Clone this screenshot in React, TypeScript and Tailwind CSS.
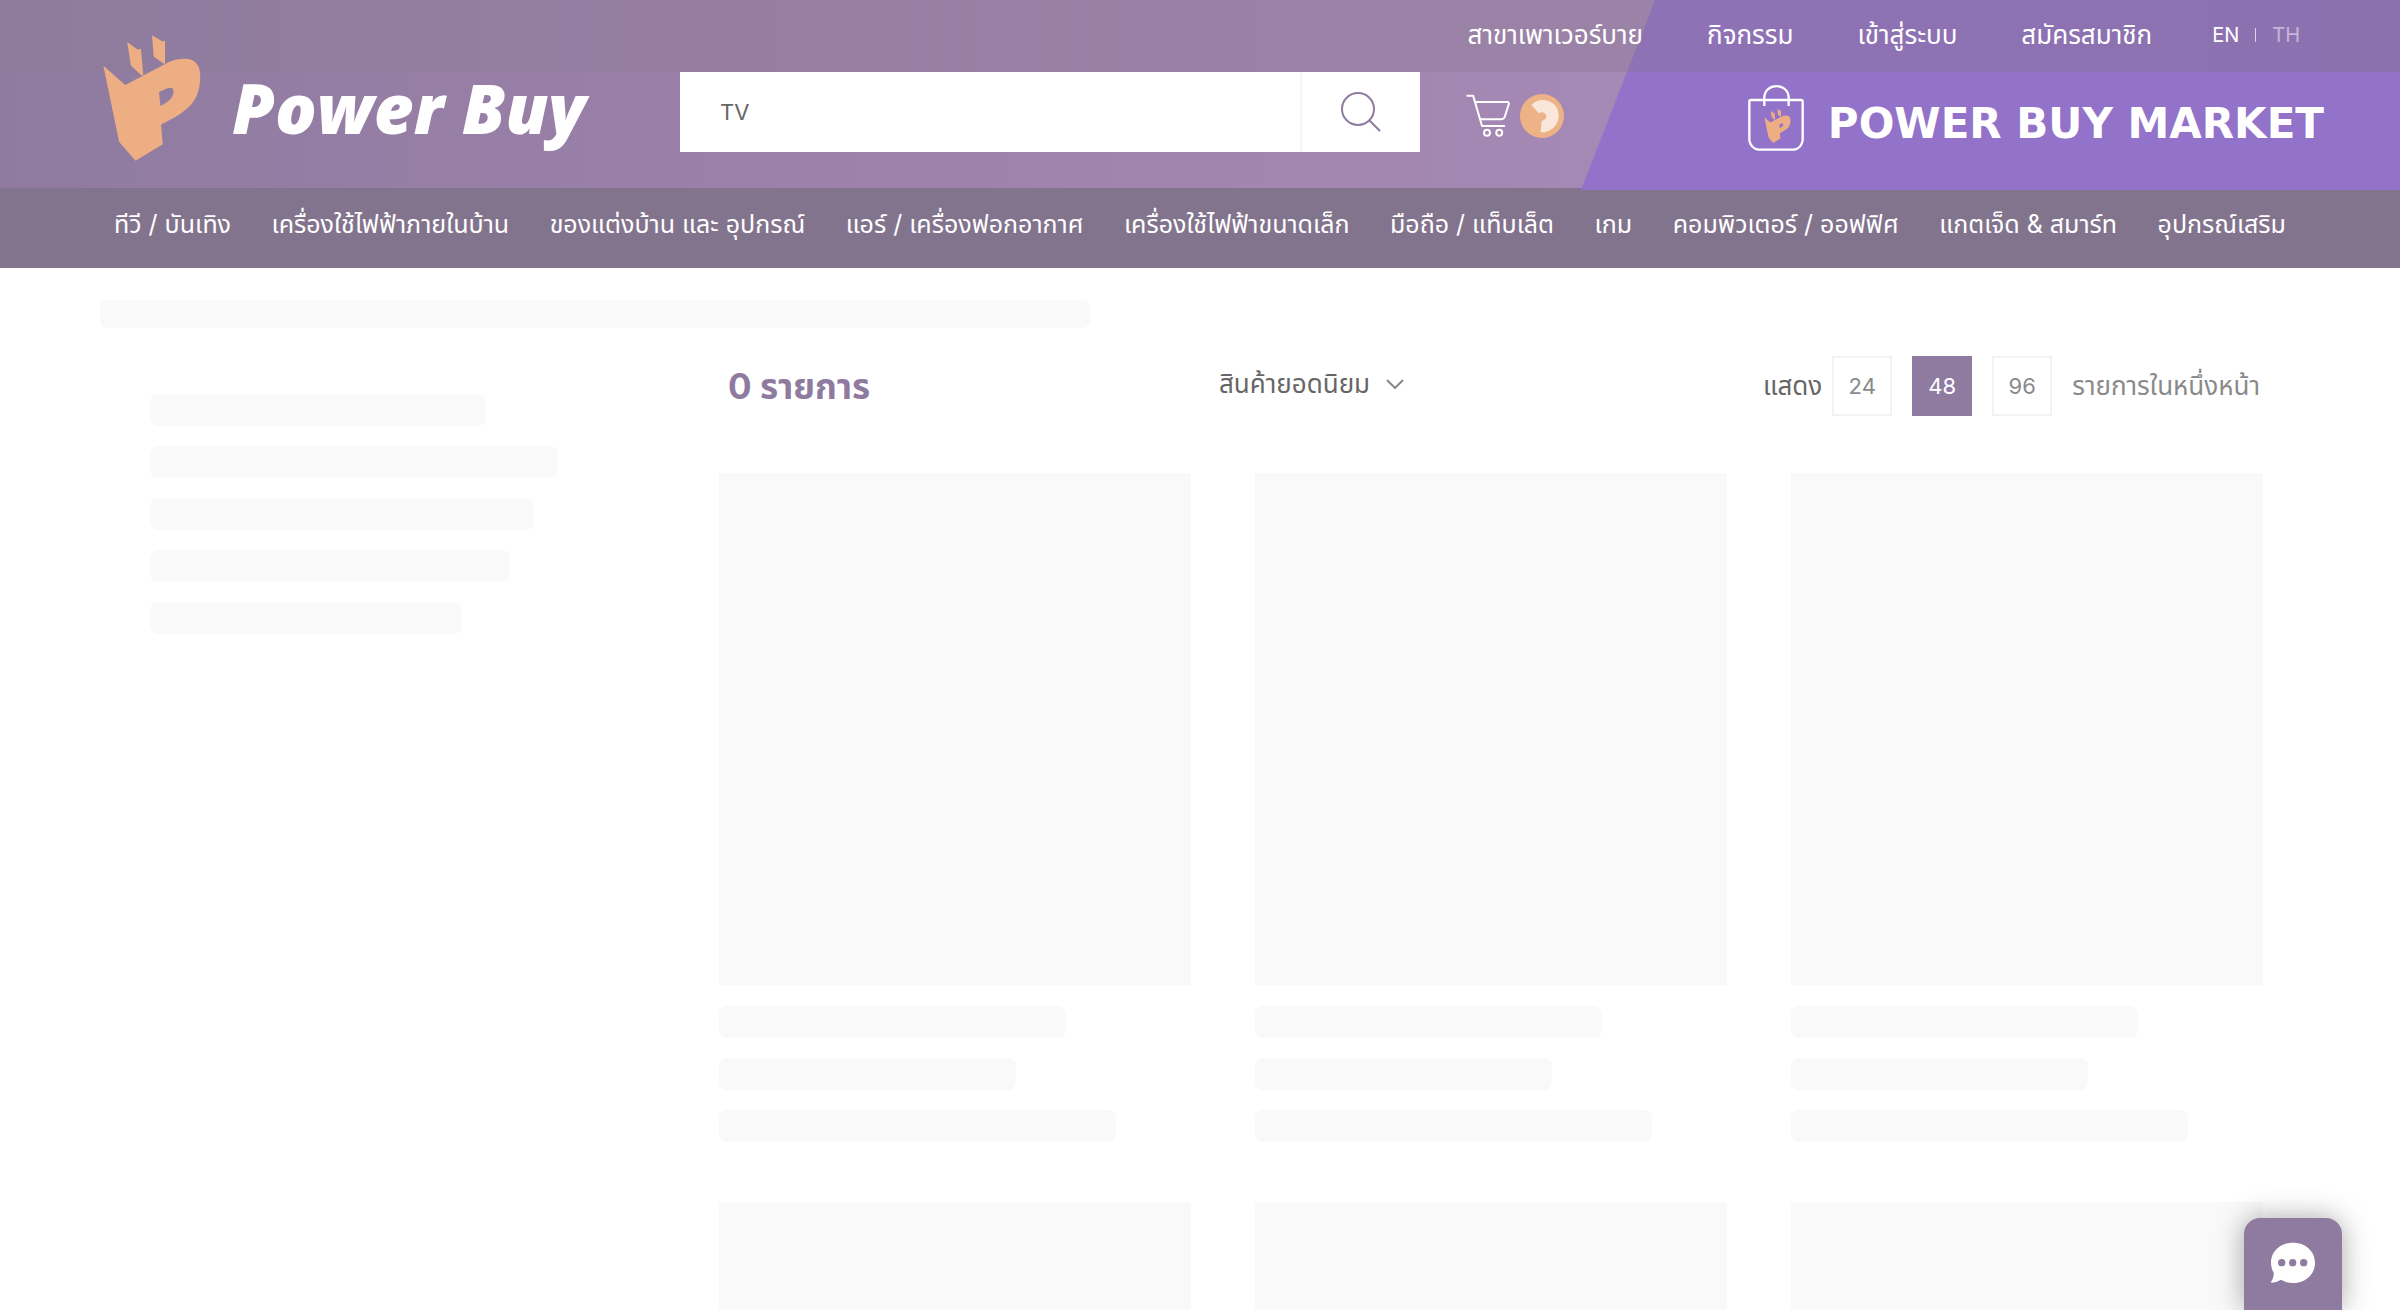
const topLinks = ['สาขาเพาเวอร์บาย', 'กิจกรรม', 'เข้าสู่ระบบ', 'สมัครสมาชิก'];

const categories = [
  'ทีวี / บันเทิง',
  'เครื่องใช้ไฟฟ้าภายในบ้าน',
  'ของแต่งบ้าน และ อุปกรณ์',
  'แอร์ / เครื่องฟอกอากาศ',
  'เครื่องใช้ไฟฟ้าขนาดเล็ก',
  'มือถือ / แท็บเล็ต',
  'เกม',
  'คอมพิวเตอร์ / ออฟฟิศ',
  'แกตเจ็ด & สมาร์ท',
  'อุปกรณ์เสริม',
];

const filterBars = ['w-[336px]', 'w-[408px]', 'w-[384px]', 'w-[360px]', 'w-[312px]'];

function PlugMark({ className }: { className: string }) {
  return (
    <svg viewBox="40 46 292 376" className={className} fill="#ecae82" aria-hidden="true">
      <path d="M112 67 L144 90 L153 87 L160 166 L154 166 L123 137 Z" />
      <path d="M186 47 L216 65 L225 63 L225 132 L221 132 L191 110 Z" />
      <path
        fillRule="evenodd"
        d="M41 138 L106 195 L228 131 C252 119 268 117 288 117 C316 118 330 138 330 168 C330 246 292 274 213 313 L218 372 L137 421 L88 365 Z M207 216 L211 258 C238 244 252 230 250 212 C249 203 242 202 231 205 Z"
      />
    </svg>
  );
}

function Cart() {
  return (
    <svg viewBox="0 0 132 130" className="h-[43px] w-11" fill="none" stroke="#fff" strokeWidth="6" aria-hidden="true">
      <path d="M1 5 H21 L48 97 H117" strokeLinejoin="round" />
      <path d="M27 24 H125 Q130 24 129 30 L117 68 Q114 76 108 76 H43" />
      <circle cx="63" cy="117" r="9" />
      <circle cx="100" cy="117" r="9" />
    </svg>
  );
}

function Bag() {
  return (
    <span className="relative block h-[66px] w-14">
      <svg viewBox="0 0 168 198" className="h-[66px] w-14" fill="none" stroke="#fff" strokeWidth="7" aria-hidden="true">
        <path d="M4 50 Q4 45 9 45 H159 Q164 45 164 50 V166 Q160 190 138 194 H32 Q8 190 4 166 Z" />
        <path d="M49 63 V38 C49 -8 122 -8 122 38 V63" />
      </svg>
      <PlugMark className="absolute left-3.5 top-6 h-[34px] w-[31px]" />
    </span>
  );
}

function ProductSkeleton() {
  return (
    <li className="pb-15 pl-[33px] pr-[31px]">
      <div className="h-[512px] bg-[#f9f9f9]" />
      <div className="mt-[21px] h-8 w-[347px] rounded-lg bg-[#f9f9f9]" />
      <div className="mt-5 h-8 w-[297px] rounded-lg bg-[#f9f9f9]" />
      <div className="mt-5 h-8 w-[397px] rounded-lg bg-[#f9f9f9]" />
    </li>
  );
}

export default function App() {
  return (
    <div className="h-screen overflow-y-auto bg-white font-['Inter','Noto_Sans_Thai','Noto_Sans',sans-serif] text-[26px] leading-8 text-[#666] [scrollbar-width:none]">
      <header>
        <div className="relative h-[188px] bg-linear-to-r from-[#8f7ba0] via-[#9f82ac] via-40% to-[#ac91c1]">
          <div className="absolute right-0 top-0 h-[190px] w-[819px] bg-[#9372c9] [clip-path:polygon(74px_0,100%_0,100%_100%,0_100%)]" />
          <div className="relative h-[72px] bg-linear-to-r from-[#8080801a] to-[#80708059]">
            <nav aria-label="บัญชี" className="mr-[100px] flex h-[70px] items-center justify-end text-white">
              <div className="mr-15 flex gap-16">
                {topLinks.map((t) => (
                  <a key={t} href="#">{t}</a>
                ))}
              </div>
              <span className="flex items-center gap-4 text-xl">
                <a href="#">EN</a>
                <span className="h-3.5 w-px bg-white/70" />
                <a href="#" className="text-white/50">TH</a>
              </span>
            </nav>
          </div>
          <div className="relative flex h-[116px] items-start pl-[103px] pr-[76px]">
            <a href="#" aria-label="Power Buy" className="-mt-[37px] flex w-[577px] items-start">
              <PlugMark className="h-[126px] w-[98px]" />
              <span className="mt-8 whitespace-nowrap pl-[31px] font-['Open_Sans'] text-[69px] font-extrabold italic leading-[80px] text-white">Power Buy</span>
            </a>
            <form className="flex h-20 w-[740px] bg-white" onSubmit={(e) => e.preventDefault()}>
              <input aria-label="ค้นหา" defaultValue="TV" className="min-w-0 flex-1 px-10 text-[22px] outline-none" />
              <button aria-label="ค้นหา" className="flex w-[120px] items-center justify-center border-l-2 border-[#f5f5f5]">
                <svg viewBox="0 0 40 40" className="size-10" fill="none" stroke="#8f7ba0" strokeWidth="2" aria-hidden="true">
                  <circle cx="17" cy="17" r="16" />
                  <path d="M28 28 L39 39" />
                </svg>
              </button>
            </form>
            <a href="#" aria-label="ตะกร้าสินค้า" className="ml-[46px] mt-[22px] flex gap-2.5">
              <Cart />
              <svg viewBox="0 0 132 132" className="size-11" aria-hidden="true">
                <circle cx="66" cy="66" r="66" fill="#eeb287" />
                <path d="M34 33 C48 19 66 15 82 20 C108 27 117 48 116 68 C114 96 90 116 62 115 L65 80 C78 79 82 68 76 60 C70 53 63 54 57 58 Z" fill="#f9e7dc" />
              </svg>
            </a>
            <a href="#" className="ml-auto mt-[13px] flex items-start gap-6 whitespace-nowrap font-['DejaVu_Sans'] text-[42px] font-bold leading-[66px] text-white">
              <Bag />
              <span className="pt-1.5">POWER BUY MARKET</span>
            </a>
          </div>
        </div>
        <nav aria-label="หมวดหมู่" className="flex h-20 items-start justify-between whitespace-nowrap bg-[#83748e] px-[114px] pt-5 text-[25px] text-white">
          {categories.map((c) => (
            <a key={c} href="#">{c}</a>
          ))}
        </nav>
      </header>

      <main className="px-[100px] pt-8">
        <div className="h-7 w-[45%] rounded-lg bg-[#f9f9f9]" />
        <div className="mt-7 flex">
          <aside className="w-[586px] shrink-0 space-y-5 pl-[50px] pt-[38px]">
            {filterBars.map((w) => (
              <div key={w} className={`h-8 rounded-lg bg-[#f9f9f9] ${w}`} />
            ))}
          </aside>
          <section className="flex-1">
            <div className="flex h-[117px] items-start justify-between pl-[42px] pr-10">
              <h1 className="w-[491px] pt-3.5 text-[35px] font-bold leading-8 text-[#8f7ba0]">0 รายการ</h1>
              <button className="mr-auto flex items-center gap-4 pt-3">
                สินค้ายอดนิยม
                <svg viewBox="0 0 18 10" className="h-2.5 w-[18px]" fill="none" stroke="#888" strokeWidth="2" aria-hidden="true">
                  <path d="M1 1 L9 9 L17 1" />
                </svg>
              </button>
              <div className="flex items-center justify-end whitespace-nowrap">
                <span className="mr-2.5">แสดง</span>
                <div className="flex gap-5 text-[#8a8a8a]">
                  <button className="size-[60px] border-2 border-[#f3f3f3] text-[22px]">24</button>
                  <button className="size-[60px] bg-[#8f7ba0] text-[22px] text-white">48</button>
                  <button className="size-[60px] border-2 border-[#f3f3f3] text-[22px]">96</button>
                  <span className="self-center">รายการในหนึ่งหน้า</span>
                </div>
              </div>
            </div>
            <ul className="mr-1.5 grid grid-cols-3">
              {[0, 1, 2, 3, 4, 5].map((n) => (
                <ProductSkeleton key={n} />
              ))}
            </ul>
          </section>
        </div>
      </main>

      <button aria-label="แชท" className="fixed bottom-0 right-[58px] flex h-[92px] w-[98px] justify-center rounded-t-2xl bg-[#8f7ba0] pt-6 shadow-[0_0_28px_rgba(0,0,0,0.35)]">
        <svg viewBox="0 0 132 124" className="h-[42px] w-11" aria-hidden="true">
          <path d="M66 1 C104 1 132 27 132 61 C132 96 104 122 66 122 C52 122 40 118 30 112 C20 117 10 121 1 121 C-1 121 0 119 1 117 C7 108 9 100 8 91 C3 82 0 72 0 61 C0 27 28 1 66 1 Z" fill="#fff" />
          <g fill="#8f7ba0">
            <circle cx="32" cy="61" r="11" />
            <circle cx="65" cy="61" r="11" />
            <circle cx="98" cy="61" r="11" />
          </g>
        </svg>
      </button>
    </div>
  );
}
